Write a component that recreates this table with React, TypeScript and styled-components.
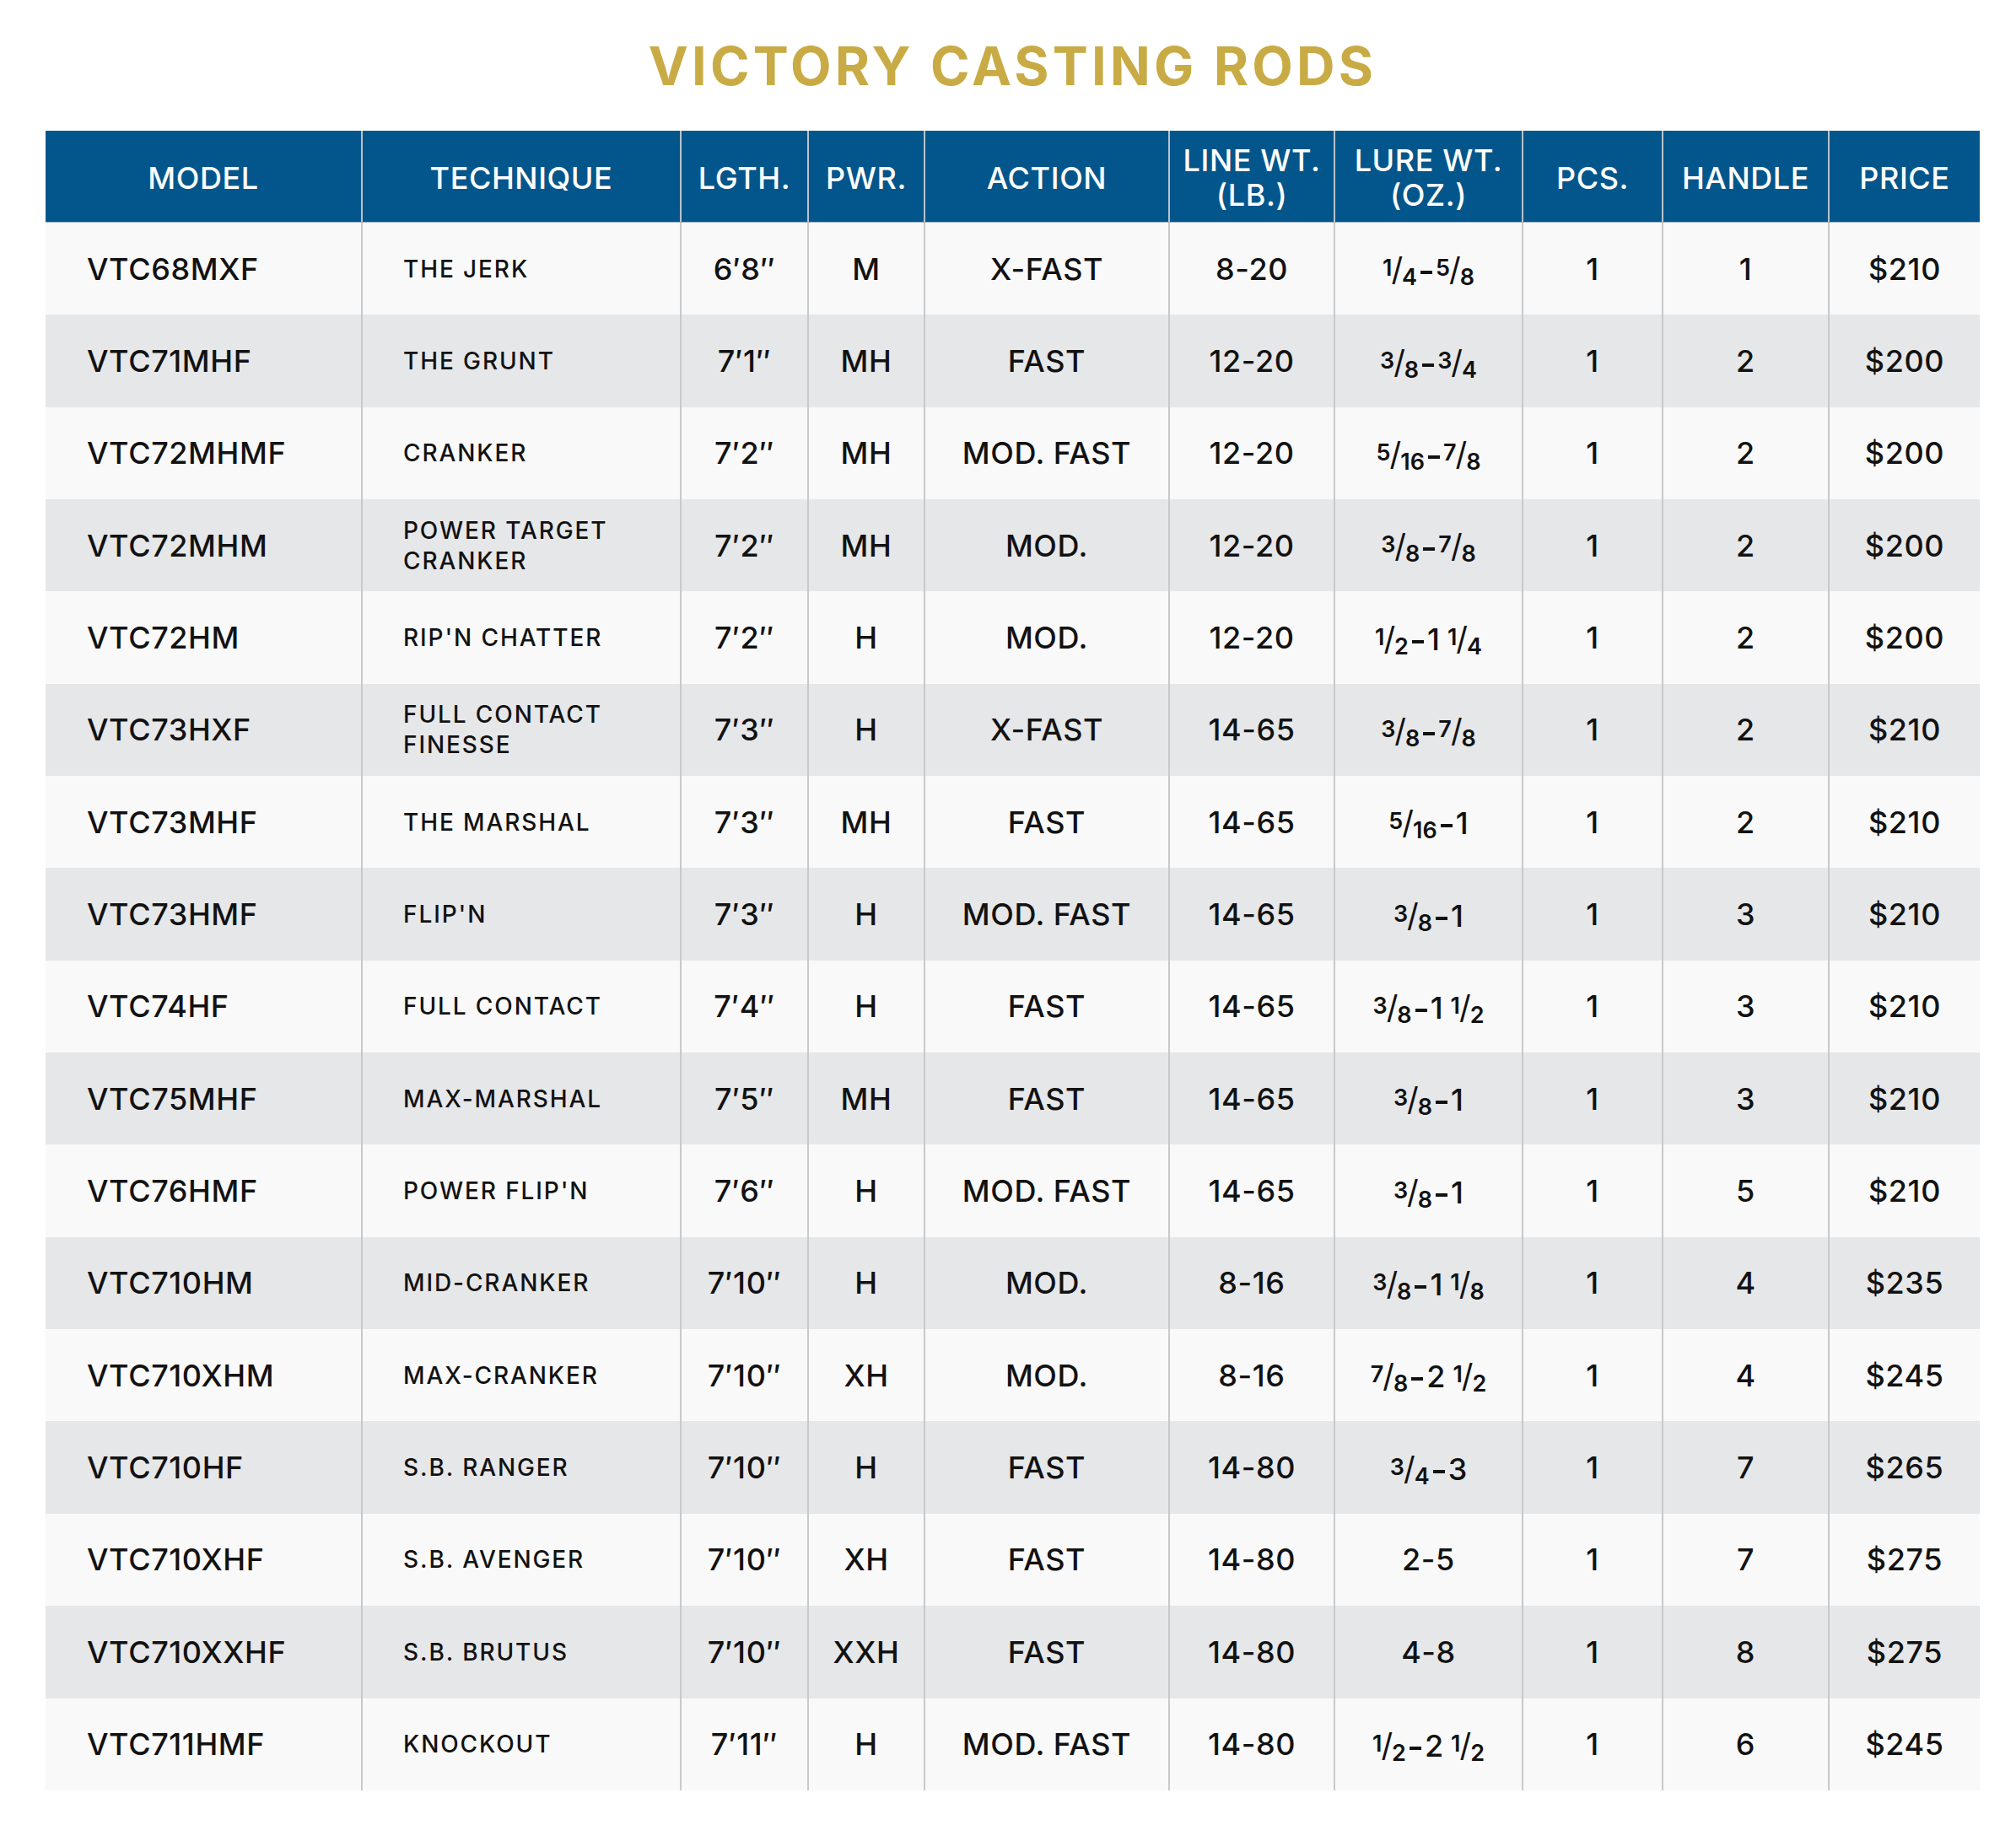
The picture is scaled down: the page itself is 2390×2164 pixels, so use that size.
import React from "react";
import styled, { createGlobalStyle } from "styled-components";

const GlobalStyle = createGlobalStyle`
  html, body {
    margin: 0;
    padding: 0;
    background: #ffffff;
  }
  body {
    font-family: Inter, "Noto Sans", "DejaVu Sans", sans-serif;
    color: #121212;
  }
`;

const COLS = "374px 378px 151px 138px 290px 196px 223px 166px 197px 180px";

const Page = styled.div`
  width: 2390px;
  height: 2164px;
  box-sizing: border-box;
  padding: 0 43px 0 54px;
  background: #ffffff;
`;

const Title = styled.h1`
  margin: 0;
  padding-top: 47px;
  height: 108px;
  font-family: Inter, "Noto Sans", sans-serif;
  font-weight: 700;
  font-size: 63px;
  line-height: 63px;
  letter-spacing: 4.2px;
  color: #c9ab45;
  text-align: center;
`;

const Table = styled.div`
  width: 2293px;
  display: flex;
  flex-direction: column;
`;

const HeadRow = styled.div`
  display: grid;
  grid-template-columns: ${COLS};
  height: 109px;
  background: #03568b;
  border-bottom: 1.5px solid #9fb1c6;
  box-sizing: border-box;
`;

const HeadCell = styled.div<{ $first?: boolean }>`
  display: flex;
  align-items: center;
  justify-content: center;
  text-align: center;
  color: #ffffff;
  font-weight: 500;
  font-size: 36px;
  line-height: 41px;
  letter-spacing: 0.6px;
  border-left: ${(p) => (p.$first ? "none" : "2px solid #b9c2cc")};
  padding-top: 4px;
  box-sizing: border-box;
`;

const HeadText = styled.span`
  white-space: pre-line;
`;

const Row = styled.div<{ $alt: boolean }>`
  display: grid;
  grid-template-columns: ${COLS};
  height: 109.35px;
  background: ${(p) => (p.$alt ? "#e6e7e9" : "#f9f9f9")};
`;

const Cell = styled.div<{ $align?: "left" | "center"; $first?: boolean; $small?: boolean }>`
  display: flex;
  align-items: center;
  justify-content: ${(p) => (p.$align === "left" ? "flex-start" : "center")};
  padding-left: ${(p) => (p.$align === "left" ? (p.$first ? "49px" : "48px") : "0")};
  border-left: ${(p) => (p.$first ? "none" : "2px solid #c8c9cb")};
  font-weight: 500;
  font-size: ${(p) => (p.$small ? "28px" : "36px")};
  line-height: ${(p) => (p.$small ? "36px" : "40px")};
  letter-spacing: ${(p) => (p.$small ? "1.9px" : "0.6px")};
  box-sizing: border-box;
  white-space: pre-line;
`;

const Lure = styled.span`
  display: inline-block;
  white-space: nowrap;
  letter-spacing: 0;
  padding-top: 3px;
`;

const FracWrap = styled.span`
  display: inline-block;
  white-space: nowrap;
  font-weight: 600;
`;

const Num = styled.span`
  font-size: 27px;
  vertical-align: 6px;
  line-height: 0;
`;

const Slash = styled.span`
  font-size: 38px;
  font-weight: 400;
  line-height: 0;
  margin: 0 -1px;
`;

const Den = styled.span`
  font-size: 27px;
  vertical-align: -5px;
  line-height: 0;
`;

const Dash = styled.span`
  display: inline-block;
  width: 14px;
  height: 4px;
  background: #121212;
  margin: 0 4px;
  vertical-align: 8px;
`;

const Whole = styled.span`
  font-weight: 500;
`;

const Space = styled.span`
  display: inline-block;
  width: 9px;
`;

function Fraction({ n, d }: { n: string; d: string }) {
  return (
    <FracWrap>
      <Num>{n}</Num>
      <Slash>/</Slash>
      <Den>{d}</Den>
    </FracWrap>
  );
}

function renderPart(part: string, key: string) {
  const bits = part.split(" ");
  return (
    <React.Fragment key={key}>
      {bits.map((b, i) => {
        const m = b.match(/^(\d+)\/(\d+)$/);
        return (
          <React.Fragment key={i}>
            {i > 0 && <Space />}
            {m ? <Fraction n={m[1]} d={m[2]} /> : <Whole>{b}</Whole>}
          </React.Fragment>
        );
      })}
    </React.Fragment>
  );
}

function LureWeight({ value }: { value: string }) {
  if (!value.includes("/")) return <span>{value}</span>;
  const parts = value.split("-");
  return (
    <Lure>
      {parts.map((p, i) => (
        <React.Fragment key={i}>
          {i > 0 && <Dash />}
          {renderPart(p, "p" + i)}
        </React.Fragment>
      ))}
    </Lure>
  );
}

type Rod = [string, string, string, string, string, string, string, string, string, string];

const rods: Rod[] = [
  ["VTC68MXF", "THE JERK", "6′8″", "M", "X-FAST", "8-20", "1/4-5/8", "1", "1", "$210"],
  ["VTC71MHF", "THE GRUNT", "7′1″", "MH", "FAST", "12-20", "3/8-3/4", "1", "2", "$200"],
  ["VTC72MHMF", "CRANKER", "7′2″", "MH", "MOD. FAST", "12-20", "5/16-7/8", "1", "2", "$200"],
  ["VTC72MHM", "POWER TARGET\nCRANKER", "7′2″", "MH", "MOD.", "12-20", "3/8-7/8", "1", "2", "$200"],
  ["VTC72HM", "RIP'N CHATTER", "7′2″", "H", "MOD.", "12-20", "1/2-1 1/4", "1", "2", "$200"],
  ["VTC73HXF", "FULL CONTACT\nFINESSE", "7′3″", "H", "X-FAST", "14-65", "3/8-7/8", "1", "2", "$210"],
  ["VTC73MHF", "THE MARSHAL", "7′3″", "MH", "FAST", "14-65", "5/16-1", "1", "2", "$210"],
  ["VTC73HMF", "FLIP'N", "7′3″", "H", "MOD. FAST", "14-65", "3/8-1", "1", "3", "$210"],
  ["VTC74HF", "FULL CONTACT", "7′4″", "H", "FAST", "14-65", "3/8-1 1/2", "1", "3", "$210"],
  ["VTC75MHF", "MAX-MARSHAL", "7′5″", "MH", "FAST", "14-65", "3/8-1", "1", "3", "$210"],
  ["VTC76HMF", "POWER FLIP'N", "7′6″", "H", "MOD. FAST", "14-65", "3/8-1", "1", "5", "$210"],
  ["VTC710HM", "MID-CRANKER", "7′10″", "H", "MOD.", "8-16", "3/8-1 1/8", "1", "4", "$235"],
  ["VTC710XHM", "MAX-CRANKER", "7′10″", "XH", "MOD.", "8-16", "7/8-2 1/2", "1", "4", "$245"],
  ["VTC710HF", "S.B. RANGER", "7′10″", "H", "FAST", "14-80", "3/4-3", "1", "7", "$265"],
  ["VTC710XHF", "S.B. AVENGER", "7′10″", "XH", "FAST", "14-80", "2-5", "1", "7", "$275"],
  ["VTC710XXHF", "S.B. BRUTUS", "7′10″", "XXH", "FAST", "14-80", "4-8", "1", "8", "$275"],
  ["VTC711HMF", "KNOCKOUT", "7′11″", "H", "MOD. FAST", "14-80", "1/2-2 1/2", "1", "6", "$245"],
];

const headers = [
  "MODEL",
  "TECHNIQUE",
  "LGTH.",
  "PWR.",
  "ACTION",
  "LINE WT.\n(LB.)",
  "LURE WT.\n(OZ.)",
  "PCS.",
  "HANDLE",
  "PRICE",
];

export default function App() {
  return (
    <>
      <GlobalStyle />
      <Page>
        <Title>VICTORY CASTING RODS</Title>
        <Table>
          <HeadRow>
            {headers.map((h, i) => (
              <HeadCell key={h} $first={i === 0}>
                <HeadText>{h}</HeadText>
              </HeadCell>
            ))}
          </HeadRow>
          {rods.map((r, ri) => (
            <Row key={r[0]} $alt={ri % 2 === 1}>
              <Cell $align="left" $first>
                {r[0]}
              </Cell>
              <Cell $align="left" $small>
                {r[1]}
              </Cell>
              <Cell>{r[2]}</Cell>
              <Cell>{r[3]}</Cell>
              <Cell>{r[4]}</Cell>
              <Cell>{r[5]}</Cell>
              <Cell>
                <LureWeight value={r[6]} />
              </Cell>
              <Cell>{r[7]}</Cell>
              <Cell>{r[8]}</Cell>
              <Cell>{r[9]}</Cell>
            </Row>
          ))}
        </Table>
      </Page>
    </>
  );
}
